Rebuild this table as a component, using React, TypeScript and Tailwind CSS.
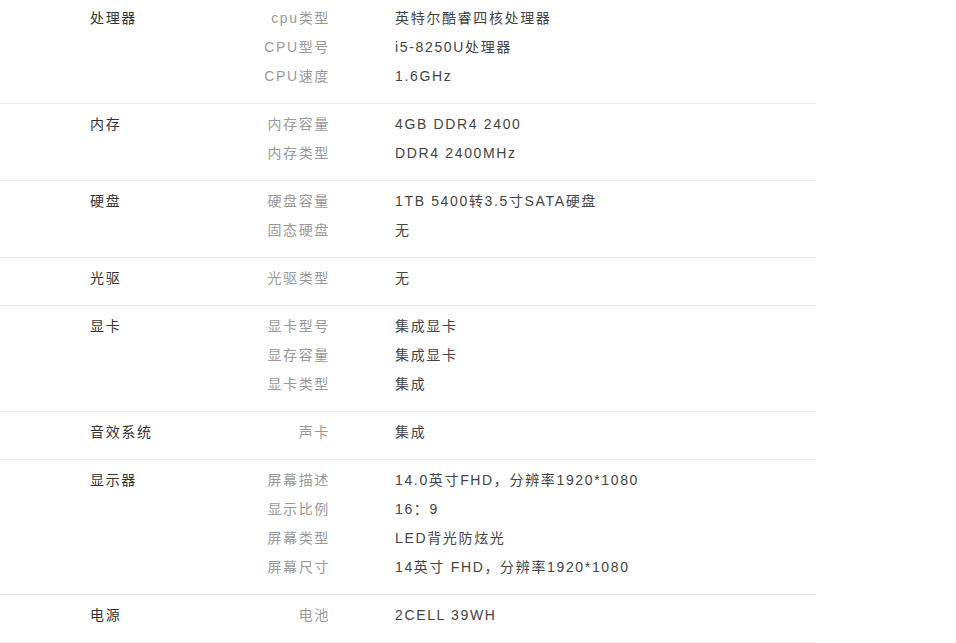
import React from "react";

type Section = { cat: string; rows: [string, string][] };

const data: Section[] = [
  { cat: "处理器", rows: [["cpu类型", "英特尔酷睿四核处理器"], ["CPU型号", "i5-8250U处理器"], ["CPU速度", "1.6GHz"]] },
  { cat: "内存", rows: [["内存容量", "4GB DDR4 2400"], ["内存类型", "DDR4 2400MHz"]] },
  { cat: "硬盘", rows: [["硬盘容量", "1TB 5400转3.5寸SATA硬盘"], ["固态硬盘", "无"]] },
  { cat: "光驱", rows: [["光驱类型", "无"]] },
  { cat: "显卡", rows: [["显卡型号", "集成显卡"], ["显存容量", "集成显卡"], ["显卡类型", "集成"]] },
  { cat: "音效系统", rows: [["声卡", "集成"]] },
  {
    cat: "显示器",
    rows: [
      ["屏幕描述", "14.0英寸FHD，分辨率1920*1080"],
      ["显示比例", "16：9"],
      ["屏幕类型", "LED背光防炫光"],
      ["屏幕尺寸", "14英寸 FHD，分辨率1920*1080"],
    ],
  },
  { cat: "电源", rows: [["电池", "2CELL 39WH"]] },
];

export default function App() {
  return (
    <div
      className="w-[956px] h-[643px] overflow-hidden bg-white text-[14px] tracking-[1.65px]"
      style={{ fontFamily: '"Liberation Sans", "Noto Sans CJK SC", sans-serif' }}
    >
      {data.map((s, i) => (
        <div
          key={s.cat}
          className={`flex w-[816px] border-b border-[#ebebeb] ${i === 0 ? "pt-[4px]" : "pt-[6px]"} pb-[12px]`}
        >
          <div className="w-[250px] pl-[90px] leading-[29px] text-[#333]">{s.cat}</div>
          <div className="flex flex-col">
            {s.rows.map(([l, v]) => (
              <div key={l} className="flex leading-[29px]">
                <div className="w-[80px] text-right text-[#999] whitespace-nowrap">{l}</div>
                <div className="pl-[65px] text-[#444] whitespace-nowrap">{v}</div>
              </div>
            ))}
          </div>
        </div>
      ))}
    </div>
  );
}
